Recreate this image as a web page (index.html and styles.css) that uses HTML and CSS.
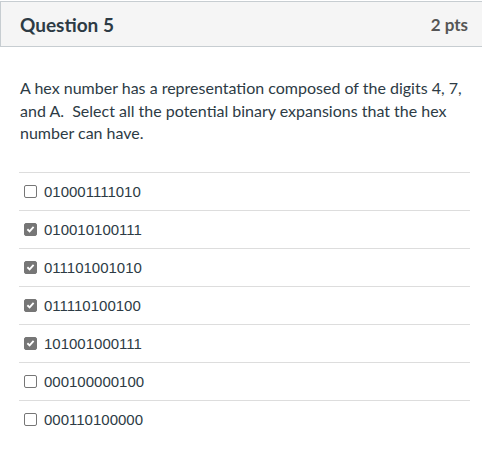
FILE: index.html
```html
<!DOCTYPE html>
<html>
<head>
<meta charset="utf-8">
<link rel="stylesheet" href="styles.css">
</head>
<body>
<div class="question">
  <div class="header">
    <span class="title">Question 5</span>
    <span class="pts">2 pts</span>
  </div>
  <div class="body">
    <p class="text">A hex number has a representation composed of the digits 4, 7, and A.&nbsp; Select all the potential binary expansions that the hex number can have.</p>
    <div class="answers">
      <div class="answer"><span class="box"></span><span class="label">010001111010</span></div>
      <div class="answer"><span class="box checked"><svg viewBox="0 0 12 12" width="12" height="12"><path d="M2.6 6.3 L5 8.6 L9.4 3.6" fill="none" stroke="#fff" stroke-width="2"/></svg></span><span class="label">010010100111</span></div>
      <div class="answer"><span class="box checked"><svg viewBox="0 0 12 12" width="12" height="12"><path d="M2.6 6.3 L5 8.6 L9.4 3.6" fill="none" stroke="#fff" stroke-width="2"/></svg></span><span class="label">011101001010</span></div>
      <div class="answer"><span class="box checked"><svg viewBox="0 0 12 12" width="12" height="12"><path d="M2.6 6.3 L5 8.6 L9.4 3.6" fill="none" stroke="#fff" stroke-width="2"/></svg></span><span class="label">011110100100</span></div>
      <div class="answer"><span class="box checked"><svg viewBox="0 0 12 12" width="12" height="12"><path d="M2.6 6.3 L5 8.6 L9.4 3.6" fill="none" stroke="#fff" stroke-width="2"/></svg></span><span class="label">101001000111</span></div>
      <div class="answer"><span class="box"></span><span class="label">000100000100</span></div>
      <div class="answer"><span class="box"></span><span class="label">000110100000</span></div>
    </div>
  </div>
</div>
</body>
</html>
```
FILE: styles.css
```css
html, body {
  margin: 0;
  padding: 0;
  background: #fff;
}
.question {
  width: 482px;
  font-family: Lato, "Liberation Sans", sans-serif;
  color: #2d3b45;
}
.header {
  box-sizing: border-box;
  height: 46px;
  margin-top: 1px;
  border-top: 1px solid #c7cdd1;
  border-bottom: 1px solid #c7cdd1;
  border-left: 1px solid #c7cdd1;
  background: #f5f5f5;
  display: flex;
  align-items: center;
  justify-content: space-between;
  padding: 0 14px 0 19px;
}
.title {
  font-weight: 700;
  font-size: 19px;
}
.pts {
  font-weight: 700;
  font-size: 17px;
  color: #555;
}
.body {
  padding: 0 12px 0 19px;
}
.text {
  margin: 30px 0 0 1px;
  font-size: 16px;
  line-height: 22.5px;
}
.answers {
  margin-top: 27px;
}
.answer {
  height: 38px;
  border-top: 1px solid #ddd;
  box-sizing: border-box;
  display: flex;
  align-items: center;
  padding-left: 5px;
}
.box {
  box-sizing: border-box;
  width: 13px;
  height: 13px;
  border: 1px solid #767676;
  border-radius: 2px;
  background: #fff;
  display: flex;
  align-items: center;
  justify-content: center;
}
.box.checked {
  background: #767676;
}
.label {
  margin-left: 7px;
  font-family: "Liberation Sans", Arial, sans-serif;
  font-size: 15px;
  margin-top: 1px;
}
```
